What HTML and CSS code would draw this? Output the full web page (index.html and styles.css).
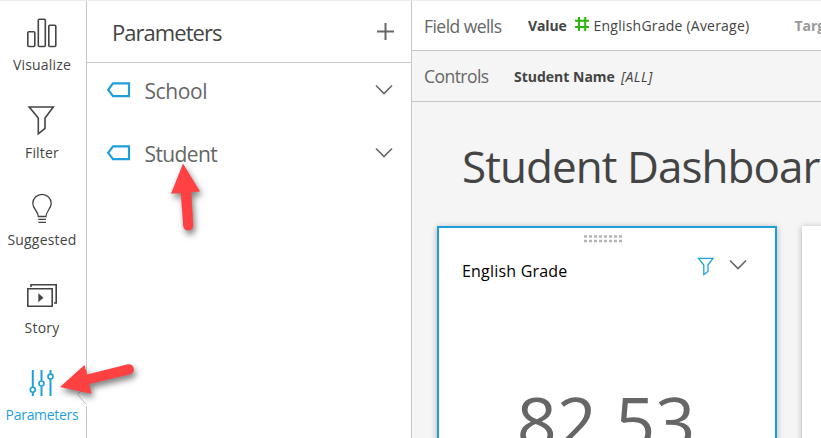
FILE: index.html
```html
<!DOCTYPE html>
<html lang="en">
<head>
<meta charset="utf-8">
<title>Student Dashboard</title>
<link rel="stylesheet" href="styles.css">
</head>
<body>
<div class="app">
  <nav class="rail">
    <a class="tool">
      <svg width="30" height="30" viewBox="0 0 30 30"><g class="line"><rect x=".8" y="13.8" width="7" height="14.7" rx="1"/><rect x="11.3" y="1.3" width="7" height="27.2" rx="1"/><rect x="21.8" y="7.3" width="7" height="21.2" rx="1"/></g></svg>
      <span class="t-visualize">Visualize</span>
    </a>
    <a class="tool">
      <svg width="30" height="30" viewBox="0 0 30 30"><path class="line" d="M2.2 1H26.3L18 12V22.3L11.3 27.8V12Z"/></svg>
      <span class="t-filter">Filter</span>
    </a>
    <a class="tool">
      <svg width="30" height="30" viewBox="0 0 30 30"><path class="line thin" d="M11.3 23.5C11.3 18 5.8 16 5.8 10.5A9.2 9.2 0 0 1 24.2 10.5C24.2 16 19 18 19 23.5ZM11.3 26.3H19M11.3 29.3H19"/></svg>
      <span class="t-suggested">Suggested</span>
    </a>
    <a class="tool">
      <svg width="30" height="30" viewBox="0 0 30 30"><path class="line" d="M.8 7.8H25.2V25.2H.8ZM4 6V3.8H29.2V22H27"/><path class="solid" d="M11.3 12.3L16.5 16.8L11.3 21.2Z"/></svg>
      <span class="t-story">Story</span>
    </a>
    <a class="tool active">
      <svg width="30" height="30" viewBox="0 0 30 30"><path class="line heavy" d="M5.8 2V19M5.8 24.6V28M14.5 2V12.6M14.5 18.4V28M23.5 2V5.8M23.5 11.2V28"/><g class="line"><circle cx="5.8" cy="21.8" r="2.5"/><circle cx="14.5" cy="15.5" r="2.5"/><circle cx="23.5" cy="8.6" r="2.5"/></g></svg>
      <span class="t-parameters">Parameters</span>
    </a>
    <svg class="notch" width="11" height="22" viewBox="0 0 11 22"><path d="M10.5 1L1.5 10.5L10.5 20.5"/></svg>
  </nav>

  <section class="panel">
    <header class="panel-head">
      <h2>Parameters</h2>
      <svg width="18" height="18" viewBox="0 0 18 18"><path class="plus" d="M1 8.5H18M9.5 0V17"/></svg>
    </header>
    <div class="param">
      <svg class="tag" width="24" height="16" viewBox="0 0 24 16"><path d="M6 1.3H22V14.2H6L1.2 7.8Z"/></svg>
      <span class="t-school">School</span>
      <svg class="chevron" width="18" height="12" viewBox="0 0 18 12"><path d="M1 1.5L9 9.5L17 1.5"/></svg>
    </div>
    <div class="param">
      <svg class="tag" width="24" height="16" viewBox="0 0 24 16"><path d="M6 1.3H22V14.2H6L1.2 7.8Z"/></svg>
      <span class="t-student">Student</span>
      <svg class="chevron" width="18" height="12" viewBox="0 0 18 12"><path d="M1 1.5L9 9.5L17 1.5"/></svg>
    </div>
  </section>

  <main class="main">
    <div class="bar wells">
      <span class="bar-label t-wells">Field wells</span>
      <b class="t-value">Value</b>
      <svg class="hash" width="16" height="16" viewBox="0 0 16 16"><path d="M1 4.7H15M1 11H15M5 1V15M11.2 1V15"/></svg>
      <span class="t-grade">EnglishGrade (Average)</span>
      <b class="t-target">Target value</b>
    </div>
    <div class="bar controls">
      <span class="bar-label t-controls">Controls</span>
      <b class="t-name">Student Name</b>
      <i class="t-all">[ALL]</i>
    </div>
    <div class="sheet">
      <h1>Student Dashboard</h1>
      <div class="cards">
        <article class="card selected">
          <svg class="grip" width="38" height="8" viewBox="0 0 38 8"><path d="M0 1.5H38M0 6H38"/></svg>
          <header class="card-head">
            <span class="t-card">English Grade</span>
            <svg class="funnel" width="18" height="19" viewBox="0 0 18 19"><path d="M1.5 1.3H16L11 8V14.5L6.8 17.5V8Z"/></svg>
            <svg class="chevron" width="18" height="12" viewBox="0 0 18 12"><path d="M1 1.5L9 9.5L17 1.5"/></svg>
          </header>
          <div class="kpi">82.53</div>
        </article>
        <article class="card"></article>
      </div>
    </div>
  </main>

  <svg class="arrows" width="821" height="438" viewBox="0 0 821 438">
    <path d="M60 387L84.5 365L87 374.5L128 364.2A5.2 5.2 0 0 1 130.5 374.2L89.3 384L91.5 393.8Z"/>
    <path d="M183 163.5L200 191.5L191.3 192L193.2 225A5 5 0 0 1 183.2 226L180.8 193L171 193.8Z"/>
  </svg>
</div>
</body>
</html>
```
FILE: styles.css
```css
* { box-sizing: border-box; }
body {
  margin: 0;
  overflow: hidden;
  font-family: "Open Sans", "Noto Sans", sans-serif;
  font-size: 14px;
  color: #444;
  background: #fff;
}
h1, h2 { margin: 0; font-weight: 400; }
svg { display: block; flex: none; fill: none; overflow: visible; }
span, b, i, h1, h2 { white-space: nowrap; }

.app {
  display: grid;
  grid-template-columns: 87px 325px 1fr;
  width: 821px;
  height: 438px;
  border-top: 1px solid #ebebeb;
  position: relative;
  overflow: hidden;
}

.rail {
  display: grid;
  grid-template-rows: 88px 87px 88px 87px 70px;
  padding-top: 17px;
  border-right: 1px solid #c8c8c8;
  position: relative;
}
.tool {
  display: flex;
  flex-direction: column;
  align-items: center;
  gap: 7px;
  width: 84px;
}
.tool span { line-height: 20px; letter-spacing: .2px; }
.tool .t-parameters { letter-spacing: -.3px; }
.tool.active { color: #1f9fda; }
.line { stroke: currentColor; stroke-width: 1.6; }
.thin { stroke-width: 1.3; }
.heavy { stroke-width: 2; }
.solid { fill: currentColor; }
.notch { position: absolute; left: 76px; top: 383px; background: #fff; }
.notch path { stroke: #c8c8c8; }

.panel { border-right: 1px solid #c8c8c8; }
.panel-head {
  display: flex;
  align-items: center;
  justify-content: space-between;
  height: 62px;
  padding: 0 17px 0 25px;
  border-bottom: 1px solid #c8c8c8;
}
.panel-head h2 { font-size: 22px; letter-spacing: -.95px; }
.plus { stroke: #666; stroke-width: 2; }
.param {
  display: flex;
  align-items: center;
  height: 63px;
  padding: 0 18px 10px 20px;
  color: #666;
  font-size: 21px;
}
.param span { margin-left: 13.5px; flex: 1; position: relative; top: 1px; letter-spacing: -.6px; }
.param .t-school { letter-spacing: -.4px; }
.tag path { stroke: #1f9fda; stroke-width: 2.2; }
.chevron path { stroke: #666; stroke-width: 1.6; }

.main { background: #f5f5f5; min-width: 0; overflow: hidden; }
.bar {
  display: flex;
  align-items: center;
  padding-left: 12px;
  border-bottom: 1px solid #c8c8c8;
}
.bar > * { flex: none; }
.wells { height: 50px; background: #fff; }
.controls { height: 51px; }
.bar-label { color: #666; font-size: 17.5px; letter-spacing: -.55px; }
.hash { margin: 0 4px 3px 7px; }
.hash path { stroke: #2fb40e; stroke-width: 2; }
.t-wells { width: 104px; }
.t-controls { width: 90px; }
.t-value { letter-spacing: -.15px; }
.t-grade { letter-spacing: .22px; }
.t-target { margin-left: 45px; color: #999; }
.t-all { margin-left: 6px; letter-spacing: .5px; }

.sheet { padding: 30px 0 0 25px; }
.sheet h1 {
  height: 94px;
  padding-left: 25px;
  font-size: 44px;
  line-height: 69px;
  letter-spacing: -.95px;
}
.cards { display: flex; gap: 25px; }
.card {
  flex: none;
  width: 340px;
  height: 260px;
  background: #fff;
  box-shadow: 0 1px 6px rgba(0, 0, 0, .3);
}
.selected { border: 2px solid #1f9fda; }
.grip { margin: 7px 0 0 145px; }
.grip path { stroke: #b5b5b5; stroke-width: 2.5; stroke-dasharray: 3 2; }
.card-head {
  display: flex;
  align-items: center;
  height: 40px;
  margin-top: 8px;
  padding: 0 28px 0 23px;
  color: #000;
  font-size: 16px;
}
.t-card { flex: 1; letter-spacing: .2px; }
.funnel { margin: 0 14px 10px 0; }
.funnel path { stroke: #1f9fda; stroke-width: 1.3; }
.card-head .chevron { margin-bottom: 12px; }
.kpi {
  margin-top: 83px;
  padding-right: 2px;
  color: #666;
  font-size: 70px;
  line-height: 95px;
  text-align: center;
}
.arrows { position: absolute; left: 0; top: -1px; pointer-events: none; }
.arrows path { fill: #ff4141; filter: drop-shadow(2px 4px 3px rgba(0, 0, 0, .5)); }
```
